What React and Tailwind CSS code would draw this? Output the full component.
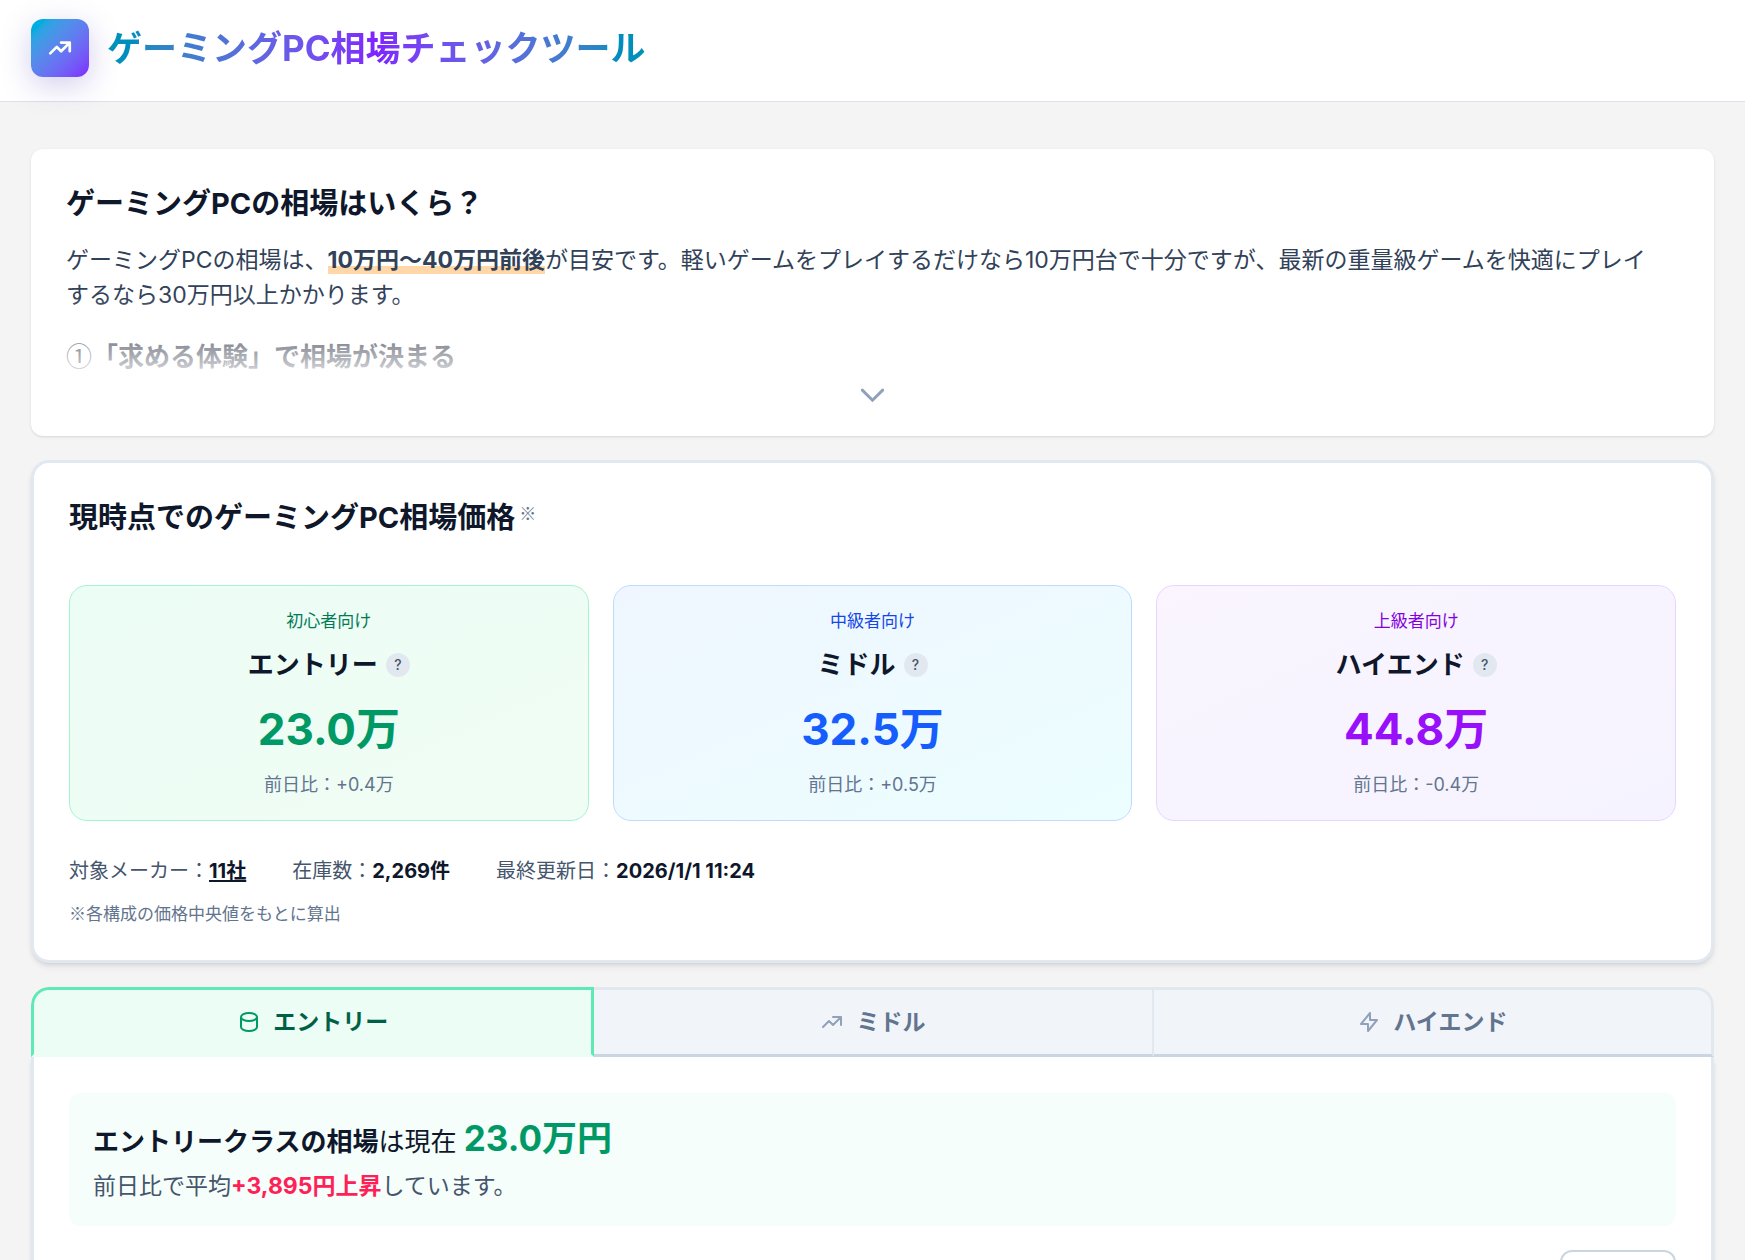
import React, { useState } from "react";

const tiers = [
  {
    id: "entry",
    name: "エントリー",
    target: "初心者向け",
    price: "23.0万",
    diff: "+0.4万",
    card: "border-emerald-200 from-emerald-50 to-green-50",
    targetColor: "text-emerald-700",
    priceColor: "text-emerald-600",
    icon: "M20 7v10c0 2.2-3.6 4-8 4s-8-1.8-8-4V7m16 0c0 2.2-3.6 4-8 4S4 9.2 4 7m16 0c0-2.2-3.6-4-8-4S4 4.8 4 7",
  },
  {
    id: "middle",
    name: "ミドル",
    target: "中級者向け",
    price: "32.5万",
    diff: "+0.5万",
    card: "border-blue-200 from-blue-50 to-cyan-50",
    targetColor: "text-blue-700",
    priceColor: "text-blue-600",
    icon: "M13 7h8m0 0v8m0-8l-8 8-4-4-6 6",
  },
  {
    id: "high",
    name: "ハイエンド",
    target: "上級者向け",
    price: "44.8万",
    diff: "-0.4万",
    card: "border-purple-200 from-purple-50 to-violet-50",
    targetColor: "text-purple-700",
    priceColor: "text-purple-600",
    icon: "M13 10V3L4 14h7v7l9-11h-7z",
  },
];

function Icon({ d, className, strokeWidth = 2 }) {
  return (
    <svg className={className} fill="none" stroke="currentColor" viewBox="0 0 24 24" aria-hidden="true">
      <path strokeLinecap="round" strokeLinejoin="round" strokeWidth={strokeWidth} d={d} />
    </svg>
  );
}

function PriceCard({ tier }) {
  return (
    <div className={`flex flex-col items-center rounded-[18px] border bg-gradient-to-br px-6 py-[21px] ${tier.card}`}>
      <p className={`text-[17px] leading-7 ${tier.targetColor}`}>{tier.target}</p>
      <div className="mt-3 flex items-center gap-2">
        <h3 className="text-[26px] leading-9 font-bold text-slate-900">{tier.name}</h3>
        <button
          type="button"
          aria-label={`${tier.name}の説明`}
          className="flex size-6 items-center justify-center rounded-full bg-slate-200 text-sm font-medium text-slate-600"
        >
          ?
        </button>
      </div>
      <p className={`mt-[18px] text-[44px] leading-[56px] font-bold ${tier.priceColor}`}>{tier.price}</p>
      <p className="mt-[14px] text-[18px] leading-7 text-slate-500">前日比：{tier.diff}</p>
    </div>
  );
}

export default function App() {
  const [activeTab, setActiveTab] = useState("entry");

  return (
    <div className="min-h-screen bg-[#f4f4f4] font-['Inter','Noto_Sans_CJK_JP',sans-serif]" lang="ja">
      <header className="border-b border-[#dcdfec] bg-white px-[31px] pt-[19px] pb-6">
        <div className="flex items-center gap-[18px]">
          <div className="flex size-[58px] items-center justify-center rounded-xl bg-gradient-to-br from-cyan-500 to-violet-600 shadow-[0_8px_30px_rgba(90,80,190,0.28)]">
            <Icon d={tiers[1].icon} strokeWidth={2.5} className="size-[26px] text-white" />
          </div>
          <h1 className="bg-gradient-to-r from-cyan-600 via-violet-600 to-cyan-600 bg-clip-text text-[35px] leading-[44px] font-bold text-transparent">
            ゲーミングPC相場チェックツール
          </h1>
        </div>
      </header>

      <main className="flex flex-col gap-6 px-[31px] pt-[47px]">
        {/* Guide */}
        <section className="rounded-xl bg-white px-[35px] pt-9 pb-6 shadow-sm">
          <div className="relative overflow-hidden pb-0.5">
            <h2 className="text-[29px] leading-[38px] font-bold text-slate-900">ゲーミングPCの相場はいくら？</h2>
            <p className="mt-5 pr-4 text-[23px] leading-[35px] text-slate-700">
              ゲーミングPCの相場は、
              <strong className="bg-gradient-to-t from-orange-200 from-30% to-transparent to-30% font-bold">
                10万円〜40万円前後
              </strong>
              が目安です。軽いゲームをプレイするだけなら10万円台で十分ですが、最新の重量級ゲームを快適にプレイするなら30万円以上かかります。
            </p>
            <h3 className="mt-6 font-['Noto_Sans_CJK_JP',sans-serif] text-[26px] leading-9 font-bold text-slate-900">
              <span className="font-normal">①</span>「求める体験」で相場が決まる
            </h3>
            <div className="pointer-events-none absolute inset-x-0 bottom-0 h-20 bg-gradient-to-t from-white/85 to-transparent"></div>
          </div>
          <button type="button" aria-label="続きを読む" className="mx-auto mt-0.5 flex items-center justify-center text-slate-400">
            <Icon d="M19 9l-7 7-7-7" className="size-[35px]" />
          </button>
        </section>

        {/* Current prices */}
        <section className="rounded-[18px] border-3 border-slate-200 bg-white px-[35px] pt-9 pb-[33px] shadow-md">
          <h2 className="flex text-[29px] leading-[38px] font-bold text-slate-900">
            現時点でのゲーミングPC相場価格
            <span className="ml-1 font-['Noto_Sans_CJK_JP',sans-serif] text-[17px] leading-7 font-normal text-slate-500">※</span>
          </h2>
          <div className="mt-12 grid grid-cols-3 gap-6">
            {tiers.map((tier) => (
              <PriceCard key={tier.id} tier={tier} />
            ))}
          </div>
          <div className="mt-9 flex flex-wrap gap-x-[46px] gap-y-2 text-[20px] leading-7 text-slate-600">
            <p>
              対象メーカー：<a href="#makers" className="font-bold text-slate-900 underline underline-offset-2">11社</a>
            </p>
            <p>
              在庫数：<span className="font-bold text-slate-900">2,269件</span>
            </p>
            <p>
              最終更新日：<span className="font-bold text-slate-900">2026/1/1 11:24</span>
            </p>
          </div>
          <p className="mt-[14px] font-['Noto_Sans_CJK_JP',sans-serif] text-[17px] leading-7 text-slate-500">
            ※各構成の価格中央値をもとに算出
          </p>
        </section>

        {/* Details by tier */}
        <section>
          <div className="flex overflow-hidden rounded-t-[18px]" role="tablist">
            {tiers.map((tier) => (
              <button
                key={tier.id}
                type="button"
                role="tab"
                aria-selected={activeTab === tier.id}
                onClick={() => setActiveTab(tier.id)}
                className={`flex h-[70px] flex-1 items-center justify-center gap-3 text-[23px] font-bold first:rounded-tl-[18px] last:rounded-tr-[18px] ${
                  activeTab === tier.id
                    ? "border-3 border-emerald-300 border-b-emerald-50 bg-emerald-50 text-emerald-800"
                    : "border-t-3 border-r-2 border-b-3 border-slate-200 border-b-slate-300 bg-slate-100 text-slate-500 last:border-r-3"
                }`}
              >
                <Icon d={tier.icon} className={`size-6 ${activeTab === tier.id ? "text-emerald-600" : "text-slate-400"}`} />
                {tier.name}
              </button>
            ))}
          </div>
          <div className="border-x-3 border-slate-200 bg-white px-[35px] pt-9 shadow-md">
            <div className="rounded-xl bg-emerald-50/50 px-6 pt-[26px] pb-[22px]">
              <p className="text-[26px] leading-[46px] text-slate-900">
                <strong className="font-bold">エントリークラスの相場</strong>は現在{" "}
                <span className="text-[35px] leading-[35px] font-bold text-emerald-600">23.0万円</span>
              </p>
              <p className="mt-1 text-[23px] leading-[35px] text-slate-600">
                前日比で平均<strong className="font-bold text-rose-500">+3,895円上昇</strong>しています。
              </p>
            </div>
            <div className="mt-6 flex justify-end">
              <button type="button" aria-label="期間" className="h-12 w-[116px] rounded-xl border-2 border-slate-300 bg-white"></button>
            </div>
          </div>
        </section>
      </main>
    </div>
  );
}
